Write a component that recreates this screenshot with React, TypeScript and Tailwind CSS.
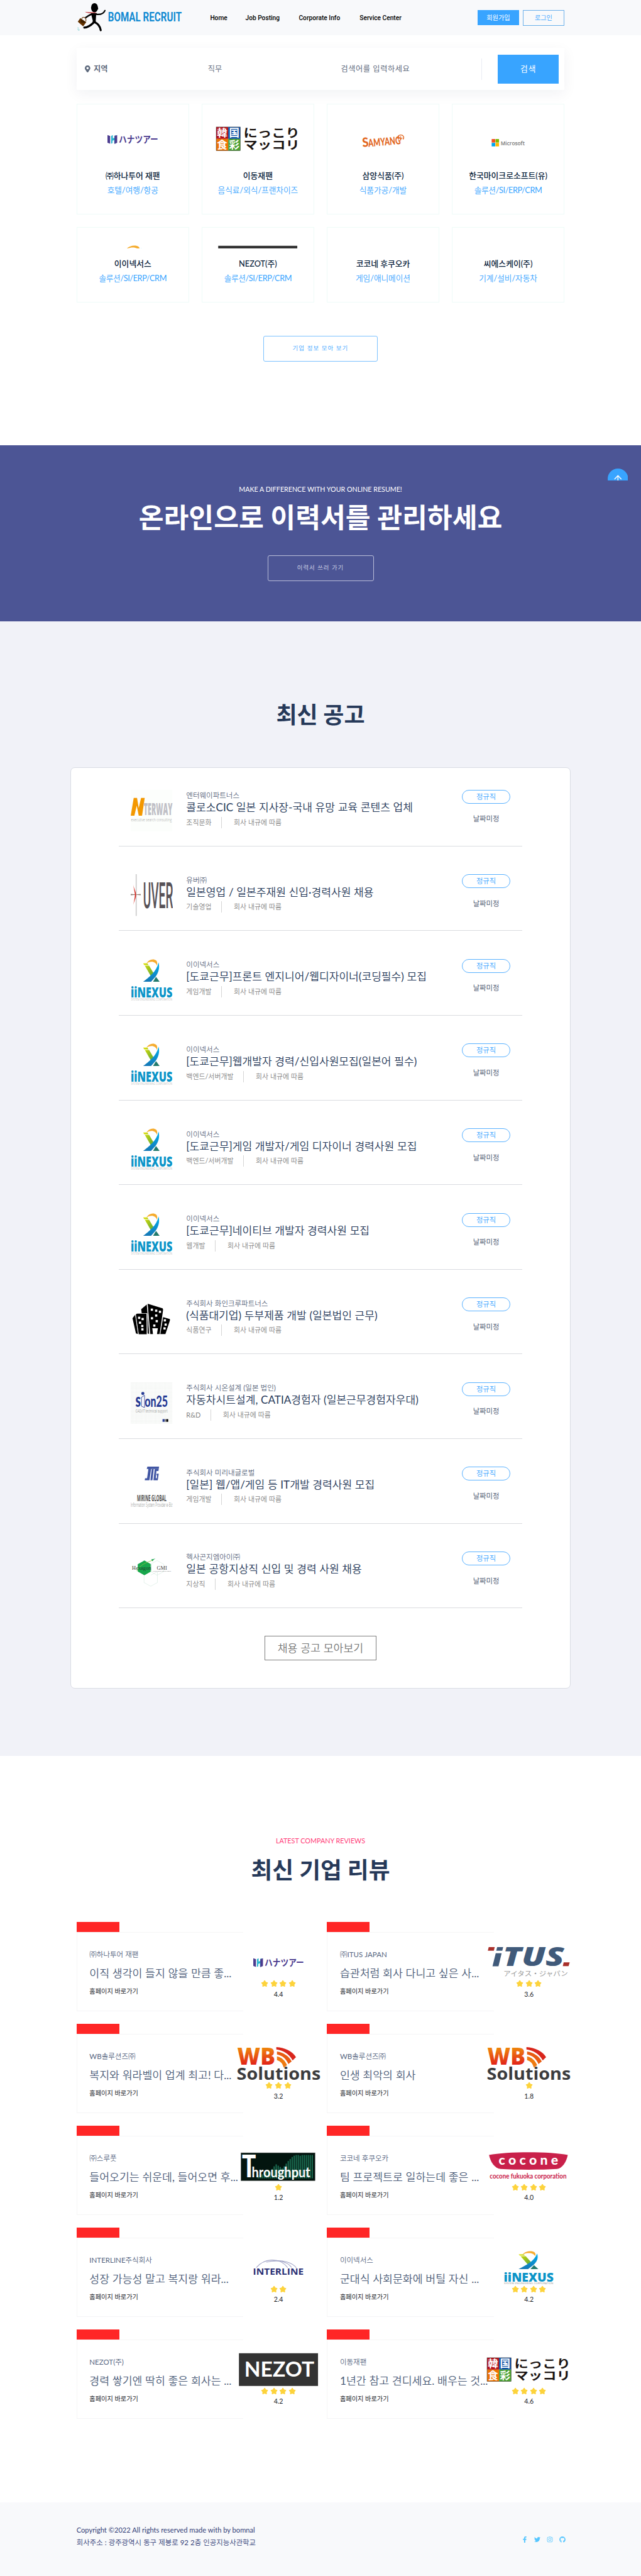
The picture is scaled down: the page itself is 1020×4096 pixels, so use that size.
import React from 'react';
import { FaFacebookF, FaTwitter, FaInstagram, FaGithub, FaMapMarkerAlt } from 'react-icons/fa';

/* Lighter Hangul face; Latin runs inside it keep the regular weight. */
const light = 'font-[350] ';

function Mixed({ children }: { children: string }) {
  return (
    <>
      {children.split(/([!-~·]+)/).map((part, i) =>
        i % 2 ? <span key={i} className="font-normal">{part}</span> : part,
      )}
    </>
  );
}

/* ---------- logos ---------- */

function BrandLogo() {
  return (
    <svg viewBox="30 20 950 265" className="h-[46.9px] w-[168.2px] shrink-0">
      <ellipse cx="190" cy="67" rx="31" ry="42" fill="#000" />
      <path d="M216 55l8 21-8 10z" fill="#000" />
      <path d="M158 116h54l-7 12-4 60 4 12h-34l4-14z" fill="#000" />
      <g fill="none" stroke="#000" strokeLinecap="round">
        <path d="M176 123C150 124 134 142 112 155" strokeWidth="14" />
        <path d="M202 125C240 131 270 124 284 92" strokeWidth="12" />
        <path d="M185 198C160 222 130 245 98 245" strokeWidth="18" />
        <path d="M194 198C226 212 240 235 246 269" strokeWidth="18" />
      </g>
      <path d="M105 104c20 6 40 3 60 4l47 2c-20 6-60 5-76 4-14-1-22-3-31-10z" fill="#b8161c" />
      <path d="M76 166c2-20 32-16 37 4v20" fill="none" stroke="#6b3a0c" strokeWidth="6" />
      <path d="M40 193l22-33 54 36-28 39z" fill="#633200" />
      <path d="M70 168l44 30-16 6-32-6z" fill="#3f2000" />
      <path d="M37 247l13 3M37 260l14 1M43 272l14-6" stroke="#2bb3b3" strokeWidth="3" />
      <text x="311" y="187" fontFamily="Roboto, sans-serif" fontWeight="700" fontSize="114" textLength="663" lengthAdjust="spacingAndGlyphs" fill="#128ad2">
        BOMAL RECRUIT
      </text>
    </svg>
  );
}

const wide = 'block h-[53.1px] w-[132.8px] shrink-0 overflow-visible';
const CJK = "'Noto Sans CJK JP', sans-serif";

function Hana() {
  return (
    <svg viewBox="0 0 250 100" className={wide}>
      <path d="M49 39l8 3v23l-8-3z" fill="#4b3b8f" />
      <path d="M60 42l5-3v10l5-2v-6l4-2v22l-5 3V54l-5 2v7l-4 2z" fill="#27b5cf" />
      <path d="M70 42l8-3v23l-8 4z" fill="#4b3b8f" />
      <text x="83" y="62" fontFamily={CJK} fontWeight="700" fontSize="27" textLength="118" lengthAdjust="spacingAndGlyphs" fill="#4b3b8f">ハナツアー</text>
    </svg>
  );
}

function Makkori() {
  const cells: [number, number, string, string][] = [
    [0, 15, '#b5121b', '韓'],
    [36, 15, '#0a4ea2', '国'],
    [0, 50.5, '#ee7300', '食'],
    [36, 50.5, '#4aa031', '彩'],
  ];
  return (
    <svg viewBox="0 0 250 100" className={wide}>
      {cells.map(([x, y, c, t]) => (
        <g key={t}>
          <rect x={x} y={y} width="36" height="35.5" fill={c} />
          <text x={x + 18} y={y + 29} textAnchor="middle" fontFamily={CJK} fontWeight="700" fontSize="31" fill="#fff">{t}</text>
        </g>
      ))}
      <rect x="0" y="15" width="72" height="71" fill="none" stroke="#333" strokeWidth="1" />
      <text x="82" y="45" fontFamily={CJK} fontWeight="700" fontSize="34" textLength="168" lengthAdjust="spacingAndGlyphs" fill="#1a1311">にっこり</text>
      <text x="82" y="81" fontFamily={CJK} fontWeight="700" fontSize="34" textLength="168" lengthAdjust="spacingAndGlyphs" fill="#1a1311">マッコリ</text>
    </svg>
  );
}

function Samyang() {
  return (
    <svg viewBox="0 0 250 100" className={wide}>
      <g transform="rotate(-5 64 76)" fill="#e2661d" fontFamily="Lato, sans-serif" fontWeight="900">
        <text x="64" y="75" fontSize="38" textLength="19" lengthAdjust="spacingAndGlyphs">S</text>
        <text x="82" y="76" fontSize="32" textLength="97" lengthAdjust="spacingAndGlyphs">AMYANG</text>
      </g>
      <path d="M173 52c-6-4-4-12 4-13 9-1 13 7 8 13" fill="none" stroke="#e2661d" strokeWidth="2.5" />
      <path d="M178 55v-12M178 52l-5-5M178 52l5-5" stroke="#e2661d" strokeWidth="2.2" />
    </svg>
  );
}

function Microsoft() {
  return (
    <svg viewBox="0 0 250 100" className={wide}>
      <rect x="76" y="51" width="10.5" height="10.5" fill="#f25022" />
      <rect x="87.5" y="51" width="10.5" height="10.5" fill="#7fba00" />
      <rect x="76" y="62.5" width="10.5" height="10.5" fill="#00a4ef" />
      <rect x="87.5" y="62.5" width="10.5" height="10.5" fill="#ffb900" />
      <text x="103" y="69" fontFamily="'Open Sans', sans-serif" fontWeight="600" fontSize="17.5" textLength="72" lengthAdjust="spacingAndGlyphs" fill="#737373">Microsoft</text>
    </svg>
  );
}

function NexusArt({ id }: { id: string }) {
  return (
    <>
      <defs>
        <linearGradient id={id + 'g'} x1="0" y1="0" x2="1" y2="1">
          <stop offset="0" stopColor="#e3e100" />
          <stop offset="1" stopColor="#5aa63c" />
        </linearGradient>
        <linearGradient id={id + 'b'} x1="0" y1="0" x2="0" y2="1">
          <stop offset="0" stopColor="#00b0f0" />
          <stop offset="1" stopColor="#1577b5" />
        </linearGradient>
      </defs>
      <path d="M47 13C54 1 68-2 76 4c5 4 4 12 3 16C75 8 62 4 47 13z" fill="#f5ac2f" />
      <path d="M37 13h13l3 5H40zM42 20h13l13 22-7 11z" fill={`url(#${id}g)`} />
      <path d="M84 10c4 18-1 32-9 43l-14 16H37c18-14 40-30 47-59z" fill={`url(#${id}b)`} />
      <path d="M76 54l11 15H67z" fill="#217a6c" />
      <text x="-1" y="116" fontFamily="'Open Sans', sans-serif" fontWeight="800" fontSize="45" textLength="127" lengthAdjust="spacingAndGlyphs" fill="#0b94c8">iiNEXUS</text>
      <text x="0" y="126" fontFamily="'Open Sans', sans-serif" fontSize="8.5" textLength="125" lengthAdjust="spacingAndGlyphs" fill="#999">SYSTEM ENGINEERING CORPORATION</text>
    </>
  );
}

function NexusWide() {
  return (
    <svg viewBox="0 0 250 100" className={wide}>
      <g transform="translate(51 0) scale(1.18 0.79)"><NexusArt id="w" /></g>
    </svg>
  );
}

function Nezot() {
  return (
    <svg viewBox="0 0 250 100" className={wide}>
      <rect x="6" y="1.5" width="237" height="98" fill="#333" />
      <text x="22" y="71" fontFamily="Lato, sans-serif" fontWeight="700" fontSize="60" textLength="210" lengthAdjust="spacingAndGlyphs" fill="#fff">NEZOT</text>
    </svg>
  );
}

function Cocone() {
  return (
    <svg viewBox="0 0 250 100" className={wide}>
      <path d="M6 18C60 7 190 7 242 18c-4 20-16 40-32 42-50 3-120 3-170 0C22 58 10 38 6 18z" fill="#c9204a" />
      <text x="35" y="47" fontFamily="Lato, sans-serif" fontWeight="900" fontSize="40" textLength="178" fill="#fff">cocone</text>
      <text x="8" y="89" fontFamily="Lato, sans-serif" fontWeight="700" fontSize="20" textLength="230" lengthAdjust="spacingAndGlyphs" fill="#c9204a">cocone fukuoka corporation</text>
    </svg>
  );
}

function Itus() {
  return (
    <svg viewBox="57 125 750 300" className={wide}>
      <path d="M72 142h54l-8 33H64zM746 279h54l-10 34h-52z" fill="#a9302b" />
      <path d="M148 142h54l-8 33h-54zM135 197h53l-28 117h-54z" fill="#405a7a" />
      <text x="198" y="314" fontFamily="'Open Sans', sans-serif" fontWeight="800" fontStyle="italic" fontSize="238" textLength="552" lengthAdjust="spacingAndGlyphs" fill="#405a7a">TUS</text>
      <text x="205" y="403" fontFamily={CJK} fontSize="60" textLength="580" lengthAdjust="spacingAndGlyphs" fill="#999">アイタス・ジャパン</text>
    </svg>
  );
}

function WB({ id }: { id: string }) {
  return (
    <svg viewBox="0 0 250 100" className={wide}>
      <defs>
        <linearGradient id={id} x1="0" y1="0" x2="0" y2="1">
          <stop offset="0.2" stopColor="#f0900a" />
          <stop offset="0.85" stopColor="#e0161a" />
        </linearGradient>
      </defs>
      <text x="1" y="53" fontFamily="'Open Sans', sans-serif" fontWeight="800" fontSize="70" textLength="114" lengthAdjust="spacingAndGlyphs" fill={`url(#${id})`}>WB</text>
      <path d="M118 0c26 2 48 12 59 30l-10 10C156 20 140 10 118 7z" fill="#d9261c" />
      <path d="M120 13c20 3 36 14 44 30l-10 8c-6-16-18-26-34-29z" fill="#e85c12" />
      <path d="M120 28c14 3 24 12 30 26l-10 7c-3-12-10-19-20-22z" fill="#ee7a10" />
      <text x="-1" y="98" fontFamily="'Open Sans', sans-serif" fontWeight="700" fontSize="50" textLength="252" lengthAdjust="spacingAndGlyphs" fill="#3c3c3e">Solutions</text>
    </svg>
  );
}

function Throughput() {
  const bars = [10, 14, 12, 18, 22, 26, 20, 28, 36, 42, 38, 34, 30, 36, 44, 52, 58, 64, 68, 70, 70, 68, 70, 70, 70, 70, 70, 70];
  return (
    <svg viewBox="0 0 250 100" className={wide}>
      <rect x="12" y="11.5" width="222" height="83.5" fill="#03150f" stroke="#555" />
      {bars.map((h, i) => (
        <rect key={i} x={62 + i * 6} y={88 - h} width="3.2" height={h} fill="#1f7a5c" />
      ))}
      <text x="15" y="84" fontFamily="Lato, sans-serif" fontWeight="900" fontSize="94" textLength="42" lengthAdjust="spacingAndGlyphs" fill="#fff">T</text>
      <text x="44" y="84" fontFamily="Lato, sans-serif" fontWeight="700" fontSize="42" textLength="176" lengthAdjust="spacingAndGlyphs" fill="#fff">hroughput</text>
    </svg>
  );
}

function Interline() {
  return (
    <svg viewBox="0 0 250 100" className={wide}>
      <g fill="none" stroke="#a3a6c8" strokeWidth="2">
        <path d="M58 50C80 24 125 16 152 50" />
        <path d="M88 34C120 26 150 30 164 50" />
        <path d="M100 31c40-6 68 6 78 20" />
      </g>
      <text x="48" y="72" fontFamily="'Open Sans', sans-serif" fontWeight="700" fontSize="28" textLength="152" lengthAdjust="spacingAndGlyphs" fill="#2b3175">INTERLINE</text>
    </svg>
  );
}

const square = 'block size-[66.4px] shrink-0';

function Nterway() {
  return (
    <svg viewBox="0 0 125 125" className={square}>
      <rect width="125" height="125" fill="#fcfefc" />
      <path d="M9 24h10l5 30 7-30h11l-8 53H24l-6-30-7 30H0z" fill="#f39800" />
      <text x="39" y="76" fontFamily="'Open Sans', sans-serif" fontWeight="800" fontSize="49" textLength="86" lengthAdjust="spacingAndGlyphs" fill="#bfbfc6">TERWAY</text>
      <text x="1" y="94" fontFamily="'Open Sans', sans-serif" fontSize="13" textLength="122" lengthAdjust="spacingAndGlyphs" fill="#999">executive search consulting</text>
    </svg>
  );
}

function Uver() {
  return (
    <svg viewBox="0 0 125 125" className={square}>
      <path d="M16.500 0v125" stroke="#777" strokeWidth="1.2" />
      <path d="M0 59.500l16 1.200 14-1.200v3.500l-14-1.200L0 63z" fill="#8a7a70" />
      <path d="M7 30c3 14 9 22 9 32s-6 18-9 33l4-20c2-8 2-16 0-24z" fill="#d7281f" />
      <text x="37" y="101" fontFamily="Roboto, sans-serif" fontWeight="500" fontSize="107" textLength="90" lengthAdjust="spacingAndGlyphs" fill="#575257">UVER</text>
    </svg>
  );
}

function NexusSquare({ id }: { id: string }) {
  return <svg viewBox="0 0 125 127" className={square}><NexusArt id={id} /></svg>;
}

function Buildings() {
  const win = [[216, 169], [255, 178], [289, 188], [255, 222], [217, 246], [260, 272], [238, 312], [102, 242], [133, 253], [110, 286], [130, 316], [131, 346], [333, 265], [340, 303], [330, 337]];
  return (
    <svg viewBox="36 69 375 375" className={square}>
      <path d="M52 255l24-31 27 174-20-5z" />
      <path d="M82 232q0-17 14-17h82l2 185h-72z" />
      <path d="M130 175l50-42 25 265-18-6-4-182h-48z" />
      <path d="M188 128q6-3 14 2l120 37q6 4 4 20l-30 211h-24l8-52h-50l6 52h-24z" />
      <path d="M326 245l60 17q5 3 2 14l-40 122h-48z" />
      <path d="M80 228l24 172M184 212l4 186M186 134l18 264M326 240l-26 160" stroke="#fff" strokeWidth="4" fill="none" />
      {win.map(([x, y]) => <rect key={`${x}-${y}`} x={x} y={y} width="20" height="20" fill="#fff" />)}
    </svg>
  );
}

function Sion() {
  return (
    <svg viewBox="36 828 375 374" className={square}>
      <defs>
        <pattern id="grid" width="13" height="13" patternUnits="userSpaceOnUse" x="36" y="828">
          <path d="M0 0h13M0 0v13" stroke="#e6e8e6" strokeWidth="2.5" />
        </pattern>
      </defs>
      <rect x="36" y="828" width="375" height="374" fill="#fcfdfc" />
      <rect x="36" y="828" width="375" height="374" fill="url(#grid)" />
      <g fill="#253a94" fontFamily="Lato, sans-serif" fontWeight="900">
        <text x="79" y="1050" fontSize="170" textLength="48" lengthAdjust="spacingAndGlyphs">s</text>
        <text x="162" y="1050" fontSize="140" textLength="208" lengthAdjust="spacingAndGlyphs">on25</text>
      </g>
      <circle cx="145" cy="928" r="14" fill="#253a94" />
      <path d="M133 962l27-18v110l-27-12z" fill="#fff" stroke="#253a94" strokeWidth="5" />
      <text x="80" y="1098" fontFamily="Roboto, sans-serif" fontSize="38" textLength="288" lengthAdjust="spacingAndGlyphs" fill="#888">CAD/IT technical support</text>
      <path d="M322 1158h18v24h-18z" fill="#253a94" />
      <path d="M340 1158h16v24h-16z" fill="#888" />
      <path d="M356 1158h17v24h-17z" />
    </svg>
  );
}

function Mirine() {
  return (
    <svg viewBox="0 0 125 125" className={square}>
      <g fill="#4257a4">
        <path d="M50 0h35l-1 7H61l-5 34H42l1-6h6l4-28h-5z" />
        <path d="M63 7h6l-4 34h-6zM72 7h12l-1 6h-6l-2 22h3l1-9h-2l1-5h6l-3 20H68z" />
      </g>
      <text x="19" y="103" fontFamily="'Open Sans', sans-serif" fontWeight="700" fontSize="28" textLength="88" lengthAdjust="spacingAndGlyphs" fill="#555">MIRINE GLOBAL</text>
      <text x="0" y="120" fontFamily="'Open Sans', sans-serif" fontSize="17" textLength="125" lengthAdjust="spacingAndGlyphs" fill="#777">Information System Provider e-Biz</text>
    </svg>
  );
}

function Hexagon() {
  return (
    <svg viewBox="0 0 125 125" className={square}>
      <path d="M41 27l20 11v22L41 71 21 60V38z" fill="#18a64c" />
      <path d="M79 27l20 11v22L79 71 60 60V38zM60 71l20-11v33l-20 11-20-11V71" fill="none" stroke="#cfe6da" strokeWidth="1" />
      <path d="M18 58C30 38 45 34 66 26" fill="none" stroke="#8cc63f" strokeWidth="1.500" />
      <path d="M61 24l13-3-6 4-2 4z" fill="#18a64c" />
      <text x="4" y="55" fontFamily="'Liberation Serif', serif" fontSize="17" textLength="57" lengthAdjust="spacingAndGlyphs" fill="#1f3b2c">Hexagon</text>
      <text x="78" y="55" fontFamily="'Liberation Serif', serif" fontSize="17" textLength="31" lengthAdjust="spacingAndGlyphs" fill="#444">GMI</text>
      <text x="66" y="60" fontFamily="'Liberation Serif', serif" fontSize="5" textLength="55" lengthAdjust="spacingAndGlyphs" fill="#666">Global Marketing Investment</text>
    </svg>
  );
}

/* ---------- data ---------- */

const companies = [
  { name: '㈜하나투어 재팬', cat: '호텔/여행/항공', logo: <Hana /> },
  { name: '이동재팬', cat: '음식료/외식/프랜차이즈', logo: <Makkori /> },
  { name: '삼양식품(주)', cat: '식품가공/개발', logo: <Samyang /> },
  { name: '한국마이크로소프트(유)', cat: '솔루션/SI/ERP/CRM', logo: <Microsoft /> },
  { name: '이이넥서스', cat: '솔루션/SI/ERP/CRM', logo: <NexusWide /> },
  { name: 'NEZOT(주)', cat: '솔루션/SI/ERP/CRM', logo: <Nezot /> },
  { name: '코코네 후쿠오카', cat: '게임/애니메이션', logo: <div className="mx-auto mt-[4.500px] h-px w-[52px] bg-[#f0c3cf]" /> },
  { name: '씨에스케이(주)', cat: '기계/설비/자동차', logo: null },
];

const jobs = [
  { co: '엔터웨이파트너스', title: '콜로소CIC 일본 지사장-국내 유망 교육 콘텐츠 업체', field: '조직문화', logo: <Nterway /> },
  { co: '유버㈜', title: '일본영업 / 일본주재원 신입·경력사원 채용', field: '기술영업', logo: <Uver /> },
  { co: '이이넥서스', title: '[도쿄근무]프론트 엔지니어/웹디자이너(코딩필수) 모집', field: '게임개발', logo: <NexusSquare id="a" /> },
  { co: '이이넥서스', title: '[도쿄근무]웹개발자 경력/신입사원모집(일본어 필수)', field: '백엔드/서버개발', logo: <NexusSquare id="b" /> },
  { co: '이이넥서스', title: '[도쿄근무]게임 개발자/게임 디자이너 경력사원 모집', field: '백엔드/서버개발', logo: <NexusSquare id="c" /> },
  { co: '이이넥서스', title: '[도쿄근무]네이티브 개발자 경력사원 모집', field: '웹개발', logo: <NexusSquare id="d" /> },
  { co: '주식회사 화인크루파트너스', title: '(식품대기업) 두부제품 개발 (일본법인 근무)', field: '식품연구', logo: <Buildings /> },
  { co: '주식회사 시온설계 (일본 법인)', title: '자동차시트설계, CATIA경험자 (일본근무경험자우대)', field: 'R&D', logo: <Sion /> },
  { co: '주식회사 미리내글로벌', title: '[일본] 웹/앱/게임 등 IT개발 경력사원 모집', field: '게임개발', logo: <Mirine /> },
  { co: '헥사곤지엠아이㈜', title: '일본 공항지상직 신입 및 경력 사원 채용', field: '지상직', logo: <Hexagon /> },
];

const reviews = [
  { co: '㈜하나투어 재팬', title: '이직 생각이 들지 않을 만큼 좋...', stars: 4, score: '4.4', logo: <Hana /> },
  { co: '㈜ITUS JAPAN', title: '습관처럼 회사 다니고 싶은 사...', stars: 3, score: '3.6', logo: <Itus /> },
  { co: 'WB솔루션즈㈜', title: '복지와 워라벨이 업계 최고! 다...', stars: 3, score: '3.2', logo: <WB id="wb1" /> },
  { co: 'WB솔루션즈㈜', title: '인생 최악의 회사', stars: 1, score: '1.8', logo: <WB id="wb2" /> },
  { co: '㈜스루풋', title: '들어오기는 쉬운데, 들어오면 후...', stars: 1, score: '1.2', logo: <Throughput /> },
  { co: '코코네 후쿠오카', title: '팀 프로젝트로 일하는데 좋은 ...', stars: 4, score: '4.0', logo: <Cocone /> },
  { co: 'INTERLINE주식회사', title: '성장 가능성 말고 복지랑 워라...', stars: 2, score: '2.4', logo: <Interline /> },
  { co: '이이넥서스', title: '군대식 사회문화에 버틸 자신 ...', stars: 4, score: '4.2', logo: <NexusWide /> },
  { co: 'NEZOT(주)', title: '경력 쌓기엔 딱히 좋은 회사는 ...', stars: 4, score: '4.2', logo: <Nezot /> },
  { co: '이동재팬', title: '1년간 참고 견디세요. 배우는 것...', stars: 4, score: '4.6', logo: <Makkori /> },
];

/* ---------- sections ---------- */

function Header() {
  return (
    <header className="flex h-[56.3px] items-start bg-[#f8f9fb] pl-[122.2px]">
      <div className="pt-[3.500px]"><BrandLogo /></div>
      <nav className="flex pl-[44px] pt-[19px] font-['Roboto',sans-serif] text-[10.200px] font-medium leading-[20px] text-black">
        <a className="w-[56.1px]">Home</a>
        <a className="w-[85px]">Job Posting</a>
        <a className="w-[96.8px]">Corporate Info</a>
        <a className="w-[187.5px]">Service Center</a>
      </nav>
      <div className="flex gap-[5.600px] pt-[16px] text-center text-[10.200px] leading-[24px]">
        <a className="h-[24px] w-[66.4px] bg-[#38a4ff] text-white">회원가입</a>
        <a className={light + '-mt-[0.500px] h-[25px] w-[66.4px] border border-[#6bb0ea] leading-[23px] text-[#38a4ff]'}>로그인</a>
      </div>
    </header>
  );
}

function Search() {
  return (
    <form className="relative ml-[121.700px] mt-[20.200px] flex h-[66.4px] w-[776.500px] items-center bg-white text-[12.200px] text-[#5f6b7e] shadow-[0_6px_22px_rgba(20,30,60,0.06)]">
      <span className="flex w-[209.1px] items-center pl-[13.600px] font-bold">
        <FaMapMarkerAlt className="mr-[5px] h-[11.600px] w-[8.700px]" />지역
      </span>
      <span className={light + 'w-[211.6px]'}>직무</span>
      <span className="w-[224px] tracking-[0.600px]">검색어를 입력하세요</span>
      <span className="h-[34px] w-px bg-[#e9ecf4]" />
      <button type="button" className="ml-[25px] h-[46.2px] w-[97px] bg-[#38a4ff] text-[12.800px] tracking-[1px] text-white">검색</button>
    </form>
  );
}

function Companies() {
  return (
    <section className="ml-[121.700px] mt-[21.8px] h-[543.6px] w-[776.500px]">
      <div className="grid grid-cols-4 gap-x-[19.900px] gap-y-[20.100px]">
        {companies.map((c, i) => (
          <div key={c.name} className={'flex flex-col items-center border border-[#eefbf8] pt-[28.2px] ' + (i < 4 ? 'h-[176.1px]' : 'h-[120.3px]')}>
            <div className={i < 4 ? 'h-[53.1px]' : 'h-[5.200px] overflow-hidden'}>{c.logo}</div>
            <p className={'text-[12.800px] font-medium leading-[22px] text-[#08213a] ' + (i < 4 ? 'mt-[21px]' : 'mt-[12.400px]')}>{c.name}</p>
            <p className={light + 'mt-[1.200px] text-[12.700px] leading-[22px] text-[#38a4ff] ' + (c.cat.includes('ERP') ? 'tracking-[-0.400px]' : 'tracking-[-0.050px]')}>
              <Mixed>{c.cat}</Mixed>
            </p>
          </div>
        ))}
      </div>
      <div className={light + 'mx-auto mt-[53px] h-[40.400px] w-[181.300px] rounded-[3px] border border-[#7cc2ff] text-center text-[9.500px] leading-[38px] tracking-[1px] text-[#38a4ff]'}>
        기업 정보 모아 보기
      </div>
    </section>
  );
}

function Banner() {
  return (
    <section className="relative flex h-[279.400px] flex-col items-center bg-[#4c5595] text-white">
      <p className="mt-[60px] whitespace-nowrap text-[10.700px] leading-[20px]">MAKE A DIFFERENCE WITH YOUR ONLINE RESUME!</p>
      <h2 className="mt-[3.400px] whitespace-nowrap text-[43.300px] font-bold leading-[60px]">온라인으로 이력서를 관리하세요</h2>
      <div className={light + 'mt-[31.700px] h-[40.800px] w-[169px] rounded-[3px] border border-[#b9bdd8] text-center text-[9.400px] leading-[38.500px] tracking-[1px] text-[#d9dbea]'}>
        이력서 쓰러 가기
      </div>
      <div className="absolute left-[966.600px] top-[37.200px] h-[18.300px] w-[32.600px] overflow-hidden">
        <svg viewBox="0 0 32.600 32.600" className="size-[32.600px]">
          <circle cx="16.300" cy="16.300" r="16.300" fill="#38a4ff" />
          <path d="M16.300 24V11.500M10.800 17l5.500-5.800L21.800 17" fill="none" stroke="#fff" strokeWidth="1.300" />
        </svg>
      </div>
    </section>
  );
}

function Jobs() {
  return (
    <section className="flex h-[1804.3px] flex-col items-center bg-[#f1f2f8]">
      <h2 className="mt-[123.8px] text-[36px] font-bold leading-[50px] text-[#263959]">최신 공고</h2>
      <div className={light + 'mt-[58.9px] h-[1464.500px] w-[796.800px] rounded-[7px] border border-[#d9dce4] bg-white px-[76.400px] pt-[34.2px]'}>
        <ul className="flex flex-col gap-[44.300px]">
          {jobs.map((j, i) => (
            <li key={i} className="flex h-[90.300px] border-b border-[#dadce0] pl-[19.400px]">
              {j.logo}
              <div className="w-[438.200px] whitespace-nowrap pl-[21.600px]">
                <p className="mt-[1.600px] text-[11.500px] leading-[16px] text-[#5d6980]"><Mixed>{j.co}</Mixed></p>
                <p className="text-[17.100px] leading-[22px] text-[#263959]"><Mixed>{j.title}</Mixed></p>
                <div className="mt-[3.600px] flex h-[18px] items-center text-[10.900px] leading-[18px] text-[#858585]">
                  <span><Mixed>{j.field}</Mixed></span>
                  <span className="ml-[16px] mr-[18.600px] h-[18px] w-px bg-[#d5d5d5]" />
                  <span>회사 내규에 따름</span>
                </div>
              </div>
              <div className="ml-[22px] w-[77.300px] text-center">
                <p className="h-[22px] rounded-full border border-[#5bb2ff] text-[11.400px] leading-[20px] text-[#38a4ff]">정규직</p>
                <p className="mt-[16.700px] text-[11.400px] leading-[16px] text-[#44506a]">날짜미정</p>
              </div>
            </li>
          ))}
        </ul>
        <div className="mx-auto mt-[43.500px] h-[39.700px] w-[177.200px] border border-[#7d7d7d] text-center text-[17.300px] leading-[37.500px] text-[#777]">
          채용 공고 모아보기
        </div>
      </div>
    </section>
  );
}

function Star() {
  return (
    <svg viewBox="0 0 24 24" className="h-[12.200px] w-[12.200px]">
      <path d="M12 3l3.200 5 5.800 1.600-3.800 4.600.4 6L12 18l-5.600 2.200.4-6L3 9.600 8.800 8z" fill="#fdd33c" stroke="#fdd33c" strokeWidth="3" strokeLinejoin="round" />
    </svg>
  );
}

function Reviews() {
  return (
    <section className="flex h-[1187px] flex-col items-center bg-white">
      <p className="mt-[125px] text-[10.800px] leading-[20px] text-[#ff3c78]">LATEST COMPANY REVIEWS</p>
      <h2 className="mt-[10.800px] text-[36.800px] font-bold leading-[50px] text-[#263959]">최신 기업 리뷰</h2>
      <div className="ml-[20.700px] mt-[58.500px] grid w-[797.200px] grid-cols-2 gap-y-[20.200px]">
        {reviews.map((r, i) => (
          <article key={i} className="h-[141.800px]">
            <div className="h-[15.800px] w-[68.100px] bg-[#ff2626]" />
            <div className="flex">
              <div className="h-[126px] w-[265.200px] whitespace-nowrap border-y border-l border-[#f5f5f6] pl-[19.600px] pt-[26.200px]">
                <p className={light + 'text-[11.500px] leading-[18px] text-[#56657f]'}><Mixed>{r.co}</Mixed></p>
                <p className={light + 'mt-[7.400px] text-[17.250px] leading-[26px] text-[#4d5d79]'}><Mixed>{r.title}</Mixed></p>
                <p className="mt-[8px] text-[10.200px] leading-[14px] text-[#22252b]">홈페이지 바로가기</p>
              </div>
              <div className="-ml-[10.300px] mt-[20.600px] flex w-[132.800px] flex-col items-center">
                {r.logo}
                <div className="mt-[2.300px] flex gap-[2.400px]">
                  {Array.from({ length: r.stars }, (_, k) => <Star key={k} />)}
                </div>
                <p className="mt-[2.300px] text-[10.600px] leading-[16px] text-[#22252b]">{r.score}</p>
              </div>
            </div>
          </article>
        ))}
      </div>
    </section>
  );
}

function Footer() {
  return (
    <footer className="flex h-[117px] justify-between bg-[#f8f9fb] pl-[121.700px] pr-[120.500px]">
      <div className="whitespace-nowrap pt-[33.700px] text-[11.400px] leading-[20.300px] text-[#333e78]">
        <p className="text-[11.150px]">Copyright ©2022 All rights reserved made with by bomnal</p>
        <p className={light}><Mixed>회사주소 : 광주광역시 동구 제봉로 92 2층 인공지능사관학교</Mixed></p>
      </div>
      <div className="flex gap-[10px] pt-[53.700px] text-[10px] text-[#55c6ff]">
        <FaFacebookF /><FaTwitter /><FaInstagram /><FaGithub />
      </div>
    </footer>
  );
}

export default function App() {
  return (
    <div className="h-[4096px] w-[1020px] overflow-hidden bg-white font-['Lato','Noto_Sans_CJK_KR',sans-serif]">
      <Header />
      <Search />
      <Companies />
      <Banner />
      <Jobs />
      <Reviews />
      <Footer />
    </div>
  );
}
